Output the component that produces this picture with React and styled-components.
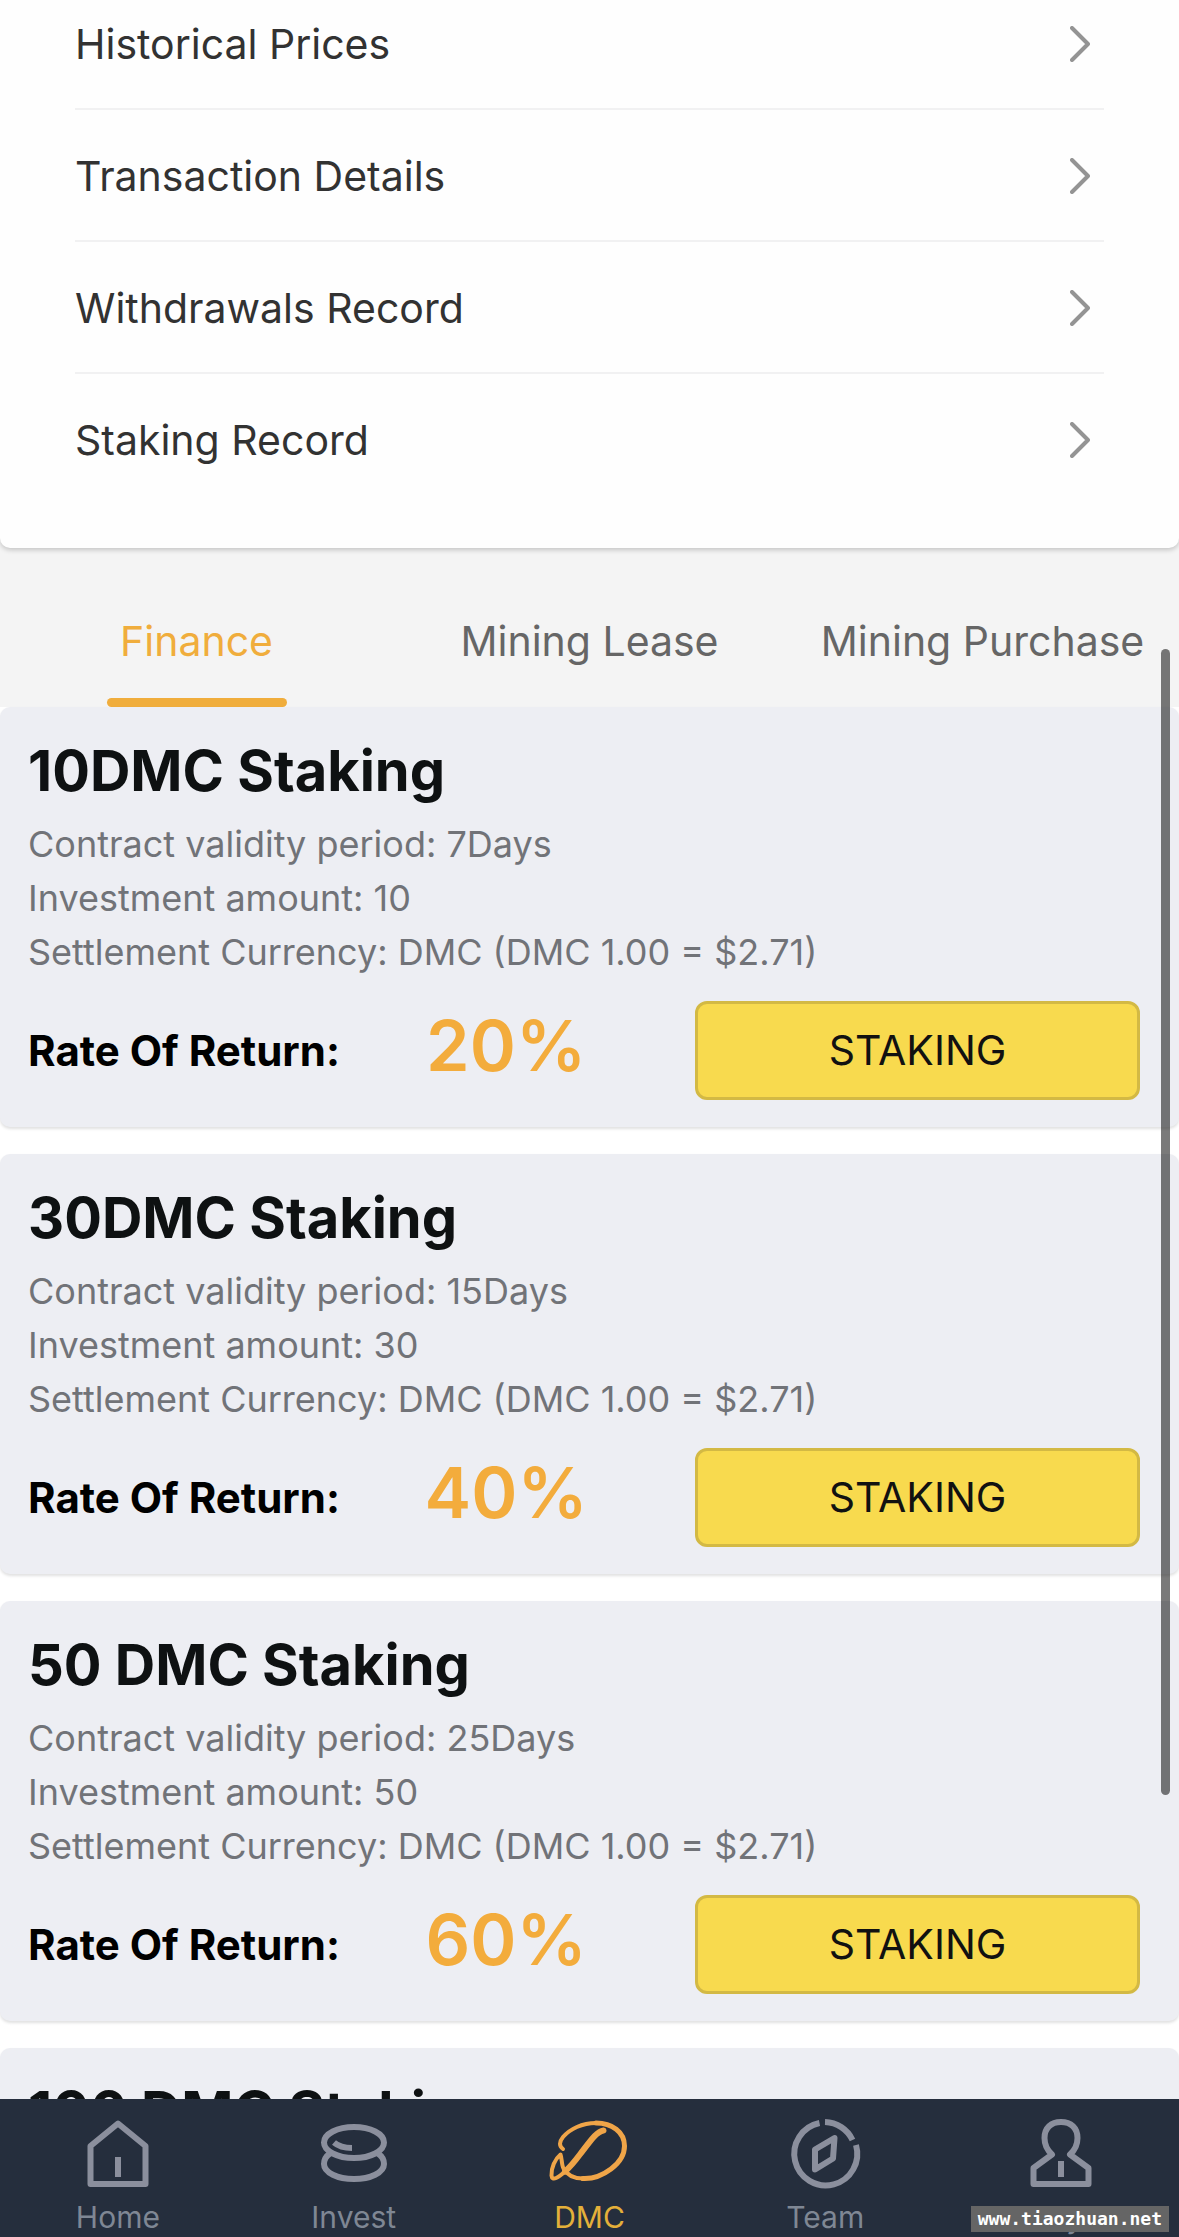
import React, { useState } from "react";
import styled, { createGlobalStyle } from "styled-components";

const records = [
  "Historical Prices",
  "Transaction Details",
  "Withdrawals Record",
  "Staking Record",
];

const tabs = ["Finance", "Mining Lease", "Mining Purchase"];

const plans = [
  { title: "10DMC Staking", days: 7, amount: 10, rate: 20 },
  { title: "30DMC Staking", days: 15, amount: 30, rate: 40 },
  { title: "50 DMC Staking", days: 25, amount: 50, rate: 60 },
  { title: "100 DMC Staking" },
];

const HomeIcon = () => (
  <NavIcon viewBox="0 0 80 80">
    <path d="M40 9.5 L67.5 32 V70 H12.5 V32 Z" />
    <path d="M40 43 V63" strokeLinecap="butt" />
  </NavIcon>
);

const InvestIcon = () => (
  <NavIcon viewBox="0 0 80 80">
    <ellipse cx="40" cy="28.5" rx="30" ry="15.5" />
    <path d="M16 39.5 C11.5 42.5 10 46 10 50 C10 58.5 23.5 65 40 65 C56.5 65 70 58.5 70 50 C70 46 68.5 42.5 64 39.5" />
    <path d="M20 28.5 C24 32 30 34 38 34" strokeLinecap="butt" />
  </NavIcon>
);

const DmcIcon = () => (
  <NavIcon viewBox="0 0 80 80">
    <path
      strokeWidth="6"
      d="M54.5 16.5 C47 17.5 40 29 30.5 41 C26 47 21 53 16 57.5"
    />
    <path
      strokeWidth="4"
      d="M16 57.5 C10 63 3 68 2.5 61.5 C2 54 6 45 11.5 40.5 C13 44 12.5 51 14.5 54.5 C18 61 25 64.5 34 64.5"
    />
    <path
      strokeWidth="5"
      d="M34 64.5 C44 65 54 61 62 55 C70 49 75.5 41 75.5 32 C75.5 18 63 9 47 9"
    />
    <path
      strokeWidth="4"
      d="M47 9 C33 9 21 15 14 23 C10 28 10 32 14 35"
    />
  </NavIcon>
);

const TeamIcon = () => (
  <NavIcon viewBox="0 0 80 80" strokeLinecap="butt">
    <path d="M40 8 A31.5 31.5 0 0 1 67.5 26" />
    <path d="M71 31 A31.5 31.5 0 1 1 34.5 9" />
    <path d="M49.5 24 L30 35.5 V55.5 L48 44.5 Z" />
  </NavIcon>
);

const MyIcon = () => (
  <NavIcon viewBox="0 0 80 80">
    <path d="M31 40.5 C26 36 23.5 30 23.5 24 C23.5 14 30 8 40 8 C50 8 56.5 14 56.5 24 C56.5 30 54 36 49 40.5 L67.5 54 V70 H12.5 V54 Z" />
    <path d="M40 47 V63" strokeLinecap="butt" />
  </NavIcon>
);

const navItems = [
  { label: "Home", Icon: HomeIcon },
  { label: "Invest", Icon: InvestIcon },
  { label: "DMC", Icon: DmcIcon },
  { label: "Team", Icon: TeamIcon },
  { label: "My", Icon: MyIcon },
];

const App = () => {
  const [activeTab, setActiveTab] = useState("Finance");

  return (
    <Screen>
      <GlobalStyle />
      <Content>
        <RecordPanel>
          {records.map((name) => (
            <RecordLink href="#" key={name}>
              {name}
              <Chevron viewBox="0 0 20 36">
                <path d="M2 2 L18 18 L2 34" />
              </Chevron>
            </RecordLink>
          ))}
        </RecordPanel>

        <TabBar role="tablist">
          {tabs.map((tab) => (
            <Tab
              key={tab}
              role="tab"
              aria-selected={tab === activeTab}
              $active={tab === activeTab}
              onClick={() => setActiveTab(tab)}
            >
              {tab}
            </Tab>
          ))}
        </TabBar>

        <PlanList>
          {plans.map((plan) => (
            <PlanCard key={plan.title}>
              <PlanTitle>{plan.title}</PlanTitle>
              {plan.amount && (
                <>
                  <PlanDetail>
                    Contract validity period: {plan.days}Days
                  </PlanDetail>
                  <PlanDetail>Investment amount: {plan.amount}</PlanDetail>
                  <PlanDetail>
                    Settlement Currency: DMC (DMC 1.00 = $2.71)
                  </PlanDetail>
                  <PlanFooter>
                    <RateLabel>Rate Of Return:</RateLabel>
                    <Rate>{plan.rate}%</Rate>
                    <StakeButton>STAKING</StakeButton>
                  </PlanFooter>
                </>
              )}
            </PlanCard>
          ))}
        </PlanList>
      </Content>

      <ScrollThumb />

      <NavBar>
        {navItems.map(({ label, Icon }) => (
          <NavLink href="#" key={label} $active={label === "DMC"}>
            <Icon />
            <span>{label}</span>
          </NavLink>
        ))}
      </NavBar>

      <Watermark>www.tiaozhuan.net</Watermark>
    </Screen>
  );
};

// ==== BASE ====

const GlobalStyle = createGlobalStyle`
  * {
    box-sizing: border-box;
  }

  body {
    margin: 0;
    background: #fff;
    font-family: Inter, "Liberation Sans", sans-serif;
  }

  a {
    color: inherit;
    text-decoration: none;
  }

  button {
    font-family: inherit;
    cursor: pointer;
  }
`;

const Screen = styled.div`
  position: relative;
  display: flex;
  flex-direction: column;
  height: 100vh;
  overflow: hidden;
`;

const Content = styled.main`
  flex: 1;
  min-height: 0;
  overflow: hidden;
  background: #fff;
`;

// ==== RECORDS ====

const RecordPanel = styled.nav`
  position: relative;
  margin-top: -22px;
  padding: 0 75px 42px;
  background: #fefefe;
  border-radius: 0 0 10px 10px;
  box-shadow: 0 2px 5px rgba(0, 0, 0, 0.2), 0 12px 0 #f4f4f4;
`;

const RecordLink = styled.a`
  display: flex;
  align-items: center;
  justify-content: space-between;
  height: 132px;
  padding: 2px 14px 0 0;
  border-bottom: 2px solid #f1f1f2;
  color: #323232;
  font-size: 41px;

  &:last-child {
    border-bottom-color: transparent;
  }
`;

const Chevron = styled.svg`
  width: 20px;
  height: 36px;
  fill: none;
  stroke: #949494;
  stroke-width: 4;
  stroke-linecap: round;
  stroke-linejoin: round;
`;

// ==== TABS ====

const TabBar = styled.div`
  display: grid;
  grid-template-columns: repeat(3, 1fr);
  height: 159px;
  background: #f4f4f4;
`;

const Tab = styled.button`
  display: flex;
  flex-direction: column;
  align-items: center;
  justify-content: flex-end;
  gap: 31px;
  padding: 0;
  border: 0;
  background: none;
  color: ${(props) => (props.$active ? "#f0ad3c" : "#666")};
  font-size: 41px;
  line-height: 52px;
  white-space: nowrap;

  &::after {
    content: "";
    width: 180px;
    height: 9px;
    border-radius: 5px;
    background: ${(props) => (props.$active ? "#f0ad3c" : "transparent")};
  }
`;

// ==== PLANS ====

const PlanList = styled.div`
  display: flex;
  flex-direction: column;
  gap: 27px;
`;

const PlanCard = styled.section`
  min-height: 420px;
  padding: 29px 39px 27px 28px;
  background: #edeef3;
  border-radius: 10px;
  box-shadow: 0 2px 3px rgba(0, 0, 0, 0.12);
`;

const PlanTitle = styled.h2`
  margin: 0 0 11px;
  color: #0e1112;
  font-size: 56px;
  line-height: 70px;
  font-weight: 700;
`;

const PlanDetail = styled.p`
  margin: 0;
  color: #717378;
  font-size: 36px;
  line-height: 54px;
`;

const PlanFooter = styled.div`
  display: grid;
  grid-template-columns: 29% 28% 3% 40%;
  align-items: center;
  height: 99px;
  margin-top: 22px;
`;

const RateLabel = styled.span`
  color: #000;
  font-size: 42px;
  font-weight: 700;
  white-space: nowrap;
`;

const Rate = styled.strong`
  padding-bottom: 10px;
  text-align: center;
  color: #f3ac3c;
  font-size: 70px;
  line-height: 88px;
  font-weight: 600;
`;

const StakeButton = styled.button`
  grid-column: 4;
  height: 99px;
  padding: 0 0 2px;
  border: 3px solid #d3b944;
  border-radius: 12px;
  background: #f8da4e;
  color: #111;
  font-size: 41px;
`;

// ==== OVERLAYS ====

const ScrollThumb = styled.div`
  position: absolute;
  top: 649px;
  right: 9px;
  width: 9px;
  height: 1146px;
  border-radius: 5px;
  background: rgba(0, 0, 0, 0.52);
`;

const Watermark = styled.div`
  position: absolute;
  right: 10px;
  bottom: 5px;
  padding: 0 7px;
  background: #656565;
  color: #fff;
  font-family: "DejaVu Sans Mono", "Liberation Mono", monospace;
  font-size: 18px;
  line-height: 26px;
  font-weight: 700;
`;

// ==== BOTTOM NAV ====

const NavBar = styled.nav`
  display: grid;
  grid-template-columns: repeat(5, 1fr);
  height: 138px;
  padding-top: 15px;
  background: #252e3d;
`;

const NavLink = styled.a`
  display: flex;
  flex-direction: column;
  align-items: center;
  gap: 5px;
  color: ${(props) => (props.$active ? "#e4b03a" : "#7f8794")};
  font-size: 30px;
  line-height: 36px;

  svg {
    stroke: ${(props) => (props.$active ? "#f0a548" : "#8b8f9d")};
  }
`;

const NavIcon = styled.svg`
  width: 80px;
  height: 80px;
  fill: none;
  stroke-width: 6;
  stroke-linecap: ${(props) => props.strokeLinecap || "round"};
  stroke-linejoin: round;
`;

export default App;
